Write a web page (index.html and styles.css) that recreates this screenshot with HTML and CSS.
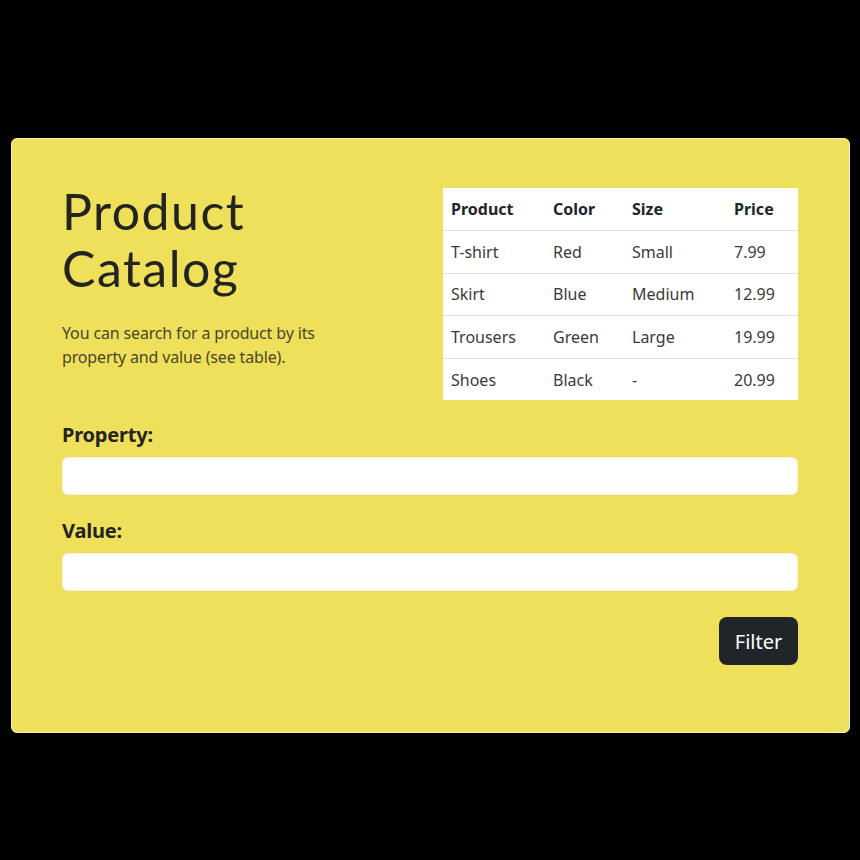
FILE: index.html
```html
<!DOCTYPE html>
<html lang="en">
<head>
<meta charset="utf-8">
<title>Product Catalog</title>
<link rel="stylesheet" href="styles.css">
</head>
<body>
<div class="card">
  <div class="top">
    <div class="intro">
      <h1 class="title">Product Catalog</h1>
      <p class="lead">You can search for a product by its property and value (see table).</p>
    </div>
    <table class="products">
      <thead>
        <tr><th>Product</th><th>Color</th><th>Size</th><th>Price</th></tr>
      </thead>
      <tbody>
        <tr><td>T-shirt</td><td>Red</td><td>Small</td><td>7.99</td></tr>
        <tr><td>Skirt</td><td>Blue</td><td>Medium</td><td>12.99</td></tr>
        <tr><td>Trousers</td><td>Green</td><td>Large</td><td>19.99</td></tr>
        <tr><td>Shoes</td><td>Black</td><td>-</td><td>20.99</td></tr>
      </tbody>
    </table>
  </div>
  <form class="form">
    <label class="label" for="prop">Property:</label>
    <input class="field" id="prop" type="text">
    <label class="label second" for="val">Value:</label>
    <input class="field" id="val" type="text">
    <div class="actions">
      <button class="btn" type="button">Filter</button>
    </div>
  </form>
</div>
</body>
</html>
```

FILE: styles.css
```css
html, body {
  margin: 0;
  padding: 0;
  background: #000;
}
body {
  width: 860px;
  height: 860px;
  font-family: "Noto Sans", "Open Sans", sans-serif;
  color: #212529;
  padding-top: 138px;
  box-sizing: border-box;
}
.card {
  margin-left: 11px;
  width: 839px;
  height: 595px;
  box-sizing: border-box;
  background: #eee05b;
  border: 1px solid #f6f0c0;
  border-radius: 6px;
  padding: 49px 51px 0 50px;
}
.top {
  display: grid;
  grid-template-columns: 356px 355px;
  column-gap: 25px;
}
.title {
  font-family: "Lato", "Noto Sans", sans-serif;
  font-weight: 400;
  font-size: 50px;
  line-height: 57px;
  margin: -5px 0 0;
  color: #23231f;
  letter-spacing: 1.5px;
}
.lead {
  margin: 24px 0 0;
  font-size: 16px;
  line-height: 24px;
  color: #4a4628;
  width: 270px;
  letter-spacing: -0.15px;
}
.products {
  border-collapse: collapse;
  background: #fff;
  width: 355px;
  font-size: 16px;
  align-self: start;
}
.products th, .products td {
  text-align: left;
  padding: 0 8px;
  height: 41.6px;
  border-top: 1px solid #dee2e6;
}
.products thead th {
  border-top: none;
  font-weight: 700;
  color: #212529;
  height: 42px;
}
.products td {
  color: #3a3a3a;
}
.products th:nth-child(1), .products td:nth-child(1) { width: 86px; }
.products th:nth-child(2), .products td:nth-child(2) { width: 63px; }
.products th:nth-child(3), .products td:nth-child(3) { width: 86px; }
.form {
  display: flex;
  flex-direction: column;
  margin-top: 20px;
}
.label {
  font-size: 20px;
  font-weight: 700;
  line-height: 30px;
  color: #23231f;
  margin-bottom: 7px;
  letter-spacing: -0.2px;
}
.label.second {
  margin-top: 21px;
}
.field {
  height: 38px;
  box-sizing: border-box;
  border: 1px solid #f4f0d8;
  border-radius: 6px;
  background: #fff;
  width: 736px;
  margin: 0;
}
.actions {
  display: flex;
  justify-content: flex-end;
  margin-top: 26px;
  width: 736px;
}
.btn {
  font-family: "Noto Sans", sans-serif;
  font-size: 20px;
  color: #fff;
  background: #212529;
  border: none;
  border-radius: 8px;
  height: 48px;
  width: 79px;
  padding: 0;
}
```
